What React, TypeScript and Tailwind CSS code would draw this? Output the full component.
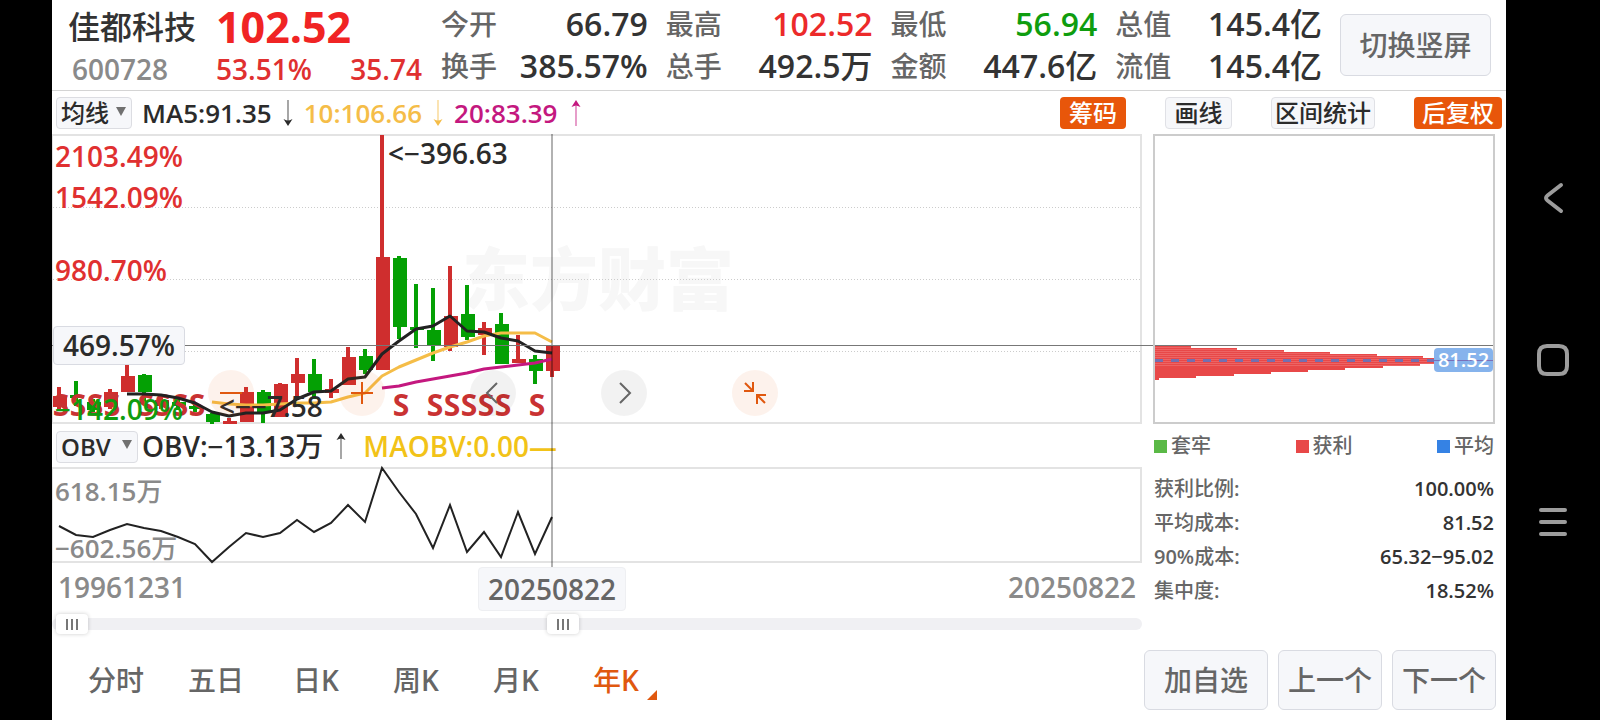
import { useState } from "react";
import clsx from "clsx";

type Candle = {
  up: boolean;
  high: number;
  top: number;
  bottom: number;
  low: number;
};

type Stat = {
  label: string;
  value: string;
  color?: string;
};

const STEP = 17;
const cx = (i: number) => 6 + i * STEP;

const c = (dir: "r" | "g", high: number, top: number, bottom: number, low: number): Candle => ({
  up: dir === "r",
  high,
  top,
  bottom,
  low,
});

const candles: Candle[] = [
  c("r", 251, 260, 271, 274),
  c("g", 245, 259, 262, 270),
  c("g", 263, 266, 274, 276),
  c("r", 253, 256, 271, 273),
  c("r", 229, 240, 256, 256),
  c("g", 238, 239, 256, 266),
  c("r", 262, 264, 270, 273),
  c("g", 263, 266, 270, 274),
  c("g", 268, 270, 273, 276),
  c("g", 277, 278, 286, 288),
  c("r", 282, 285, 288, 288),
  c("r", 251, 256, 286, 286),
  c("g", 254, 256, 277, 287),
  c("r", 247, 248, 281, 281),
  c("r", 222, 238, 247, 263),
  c("g", 223, 238, 256, 263),
  c("r", 243, 253, 257, 262),
  c("r", 211, 221, 249, 249),
  c("g", 213, 220, 234, 238),
  c("r", -1, 121, 234, 234),
  c("g", 120, 122, 191, 203),
  c("g", 148, 191, 194, 212),
  c("g", 152, 194, 210, 225),
  c("r", 130, 180, 211, 215),
  c("g", 149, 178, 201, 204),
  c("r", 186, 192, 199, 219),
  c("g", 177, 188, 228, 228),
  c("r", 199, 223, 227, 227),
  c("g", 219, 223, 235, 248),
  c("r", 209, 209, 235, 241),
];

const ma5 = [258, 258, 259, 262, 267, 276, 280, 277, 277, 274, 263, 256, 255, 243, 241, 218, 205, 193, 190, 180, 195, 196, 202, 205, 215, 217];
const ma10 = [266, 268, 269, 269, 268, 267, 267, 266, 261, 257, 240, 231, 224, 217, 211, 206, 200, 197, 197, 197, 206];
const ma20 = [252, 250, 246, 243, 240, 237, 233, 231, 229, 227, 223];
const obv = [57, 66, 68, 61, 55, 59, 62, 68, 75, 93, 78, 64, 68, 64, 51, 63, 54, 36, 53, -1, 23, 45, 79, 36, 83, 63, 88, 43, 85, 48];

const sellMarks = [0, 1, 2, 3, 5, 6, 7, 8, 20, 22, 23, 24, 25, 26, 28];

// price distribution, one bar every two pixels
const chips = [36, 82, 129, 175, 222, 268, 285, 292, 285, 265, 228, 190, 153, 116, 79, 41, 4];

const stats: Stat[] = [
  { label: "今开", value: "66.79" },
  { label: "最高", value: "102.52", color: "text-[#ec2a2a]" },
  { label: "最低", value: "56.94", color: "text-[#0f9d0f]" },
  { label: "总值", value: "145.4亿" },
  { label: "换手", value: "385.57%" },
  { label: "总手", value: "492.5万" },
  { label: "金额", value: "447.6亿" },
  { label: "流值", value: "145.4亿" },
];

const costs = [
  ["获利比例:", "100.00%"],
  ["平均成本:", "81.52"],
  ["90%成本:", "65.32−95.02"],
  ["集中度:", "18.52%"],
];

const tabs = ["分时", "五日", "日K", "周K", "月K", "年K"];

const points = (values: number[], start = 0) =>
  values.map((v, i) => `${cx(i + start)},${v}`).join(" ");

// Han characters get a lighter weight than the digits beside them
function Mixed({ children }: { children: string }) {
  return (
    <>
      {(children.match(/[\u4e00-\u9fff]+|[^\u4e00-\u9fff]+/g) ?? []).map((part, i) => (
        <span key={i} className={/[\u4e00-\u9fff]/.test(part) ? "font-medium" : "font-semibold"}>
          {part}
        </span>
      ))}
    </>
  );
}

export default function App() {
  return (
    <div className="flex min-h-screen bg-black pl-[52px] font-['Open_Sans','Noto_Sans_CJK_SC',sans-serif] font-semibold text-[#2b2b2b]">
      <main className="flex min-w-0 flex-1 flex-col bg-white">
        <Header />
        <Toolbar />
        <div className="flex gap-[11px] pr-[11px]">
          <Charts />
          <ChipPanel />
        </div>
        <BottomBar />
      </main>
      <SystemNav />
    </div>
  );
}

function Header() {
  return (
    <header className="flex h-[91px] items-center border-b border-[#d4d4d4] pr-[15px]">
      <div className="grid w-[389px] shrink-0 grid-cols-[148px_206px] items-center pl-4 pt-1">
        <h1 className="text-[32px] font-medium leading-[44px] text-[#333]">佳都科技</h1>
        <span className="text-[43px] font-bold leading-[44px] text-[#f02424]">102.52</span>
        <span className="pl-1 text-[28px] leading-10 text-[#8a8a8a]">600728</span>
        <div className="flex justify-between text-[28px] leading-10 text-[#e03030]">
          <span>53.51%</span>
          <span>35.74</span>
        </div>
      </div>
      <dl className="grid flex-1 grid-cols-4 gap-x-[18px]">
        {stats.map((s) => (
          <div key={s.label} className="flex items-center justify-between leading-[42px]">
            <dt className="text-[28px] font-medium text-[#666]">{s.label}</dt>
            <dd className={clsx("text-[32px]", s.color ?? "text-[#333]")}>
              <Mixed>{s.value}</Mixed>
            </dd>
          </div>
        ))}
      </dl>
      <button className="ml-[18px] h-[62px] w-[151px] rounded-md border border-[#d9dbe2] bg-[#f6f7fa] text-[28px] font-medium leading-none text-[#666]">
        切换竖屏
      </button>
    </header>
  );
}

function Toolbar() {
  return (
    <div className="flex h-[43px] items-center pl-1 pr-1 text-[26px] leading-8">
      <Picker label="指标" value="均线" className="w-[76px] font-medium" />
      <span className="ml-[10px]">MA5:91.35</span>
      <Arrow className="mx-[10px] text-[#2b2b2b]" />
      <span className="text-[#f5bd48]">10:106.66</span>
      <Arrow className="mx-[10px] text-[#f5bd48]" />
      <span className="text-[#c4187f]">20:83.39</span>
      <Arrow up className="ml-3 text-[#c4187f]" />
      <div className="ml-auto flex text-2xl font-medium leading-none">
        <button className="h-8 w-[66px] rounded bg-[#e8560a] text-white">筹码</button>
        <button className="ml-[39px] h-8 w-[67px] rounded border border-[#e0e1e6] bg-[#f6f7fa]">画线</button>
        <button className="ml-[39px] h-8 w-[104px] rounded border border-[#e0e1e6] bg-[#f6f7fa]">区间统计</button>
        <button className="ml-[39px] h-8 w-[88px] rounded bg-[#e8560a] text-white">后复权</button>
      </div>
    </div>
  );
}

function Picker({ label, value, className }: { label: string; value: string; className: string }) {
  return (
    <div className={clsx("relative shrink-0", className)}>
      <select
        aria-label={label}
        defaultValue={value}
        className="h-8 w-full appearance-none rounded border border-[#dcdde2] bg-[#f6f7fa] pl-1 text-2xl leading-none"
      >
        <option>{value}</option>
      </select>
      <svg className="pointer-events-none absolute right-[6px] top-[11px]" width="10" height="9">
        <path d="M0 0H10L5 9Z" fill="#707070" />
      </svg>
    </div>
  );
}

function Arrow({ up, className }: { up?: boolean; className?: string }) {
  return (
    <svg width="12" height="26" viewBox="0 0 12 26" className={clsx("shrink-0", up && "rotate-180", className)}>
      <path d="M6 0V22" stroke="currentColor" strokeOpacity="0.6" strokeWidth="1.4" />
      <path d="M1.5 19Q4.500 20.500 6 20.500T10.500 19L6 26Z" fill="currentColor" />
    </svg>
  );
}

function Charts() {
  return (
    <section className="relative min-w-0 flex-1">
      <PriceChart />
      <div className="flex h-[43px] items-center pl-1 text-[28px] leading-8">
        <Picker label="副图指标" value="OBV" className="w-[82px]" />
        <span className="ml-1">
          <Mixed>OBV:−13.13万</Mixed>
        </span>
        <Arrow up className="ml-3" />
        <span className="ml-4 text-[#f2c318]">MAOBV:0.00—</span>
      </div>
      <div className="relative h-24 border-2 border-l border-[#e3e3e3] text-[26px] leading-7 text-[#8a8a8a]">
        <svg className="absolute inset-0 h-full w-full overflow-visible">
          <polyline points={points(obv)} fill="none" stroke="#222" strokeWidth="2" />
        </svg>
        <span className="absolute left-[2px] top-2">
          <Mixed>618.15万</Mixed>
        </span>
        <span className="absolute -bottom-px left-[2px]">
          <Mixed>−602.56万</Mixed>
        </span>
      </div>
      <div className="flex h-[51px] justify-between px-[6px] pt-2 text-[28px] leading-8 text-[#8a8a8a]">
        <span>19961231</span>
        <span>20250822</span>
      </div>
      <RangeSlider />

      {/* crosshair */}
      <div className="pointer-events-none absolute left-[499px] top-0 h-[433px] w-[2px] bg-black/30" />
      <div className="pointer-events-none absolute -right-[353px] left-0 top-[211px] h-px bg-[#777]" />
      <div className="absolute left-px top-[192px] h-[39px] w-[132px] rounded border border-[#d9dbe2] bg-[#f6f7fa] text-center text-[28px] leading-9">
        469.57%
      </div>
      <div className="absolute left-[426px] top-[433px] h-11 w-[148px] rounded border border-[#eeeff2] bg-[#f6f7fa] text-center text-[28px] leading-[42px] text-[#666]">
        20250822
      </div>
    </section>
  );
}

function PriceChart() {
  return (
    <div className="relative h-[290px] border-2 border-l border-[#e3e3e3]">
      <svg className="absolute inset-0 h-full w-full overflow-visible">
        <text x="409" y="169" fontSize="68" fontWeight="900" fill="#f7f7f7">
          东方财富
        </text>
        {[71, 143, 215].map((y) => (
          <line key={y} x1="0" x2="100%" y1={y + 0.5} y2={y + 0.5} stroke="#ccc" strokeDasharray="1 2" />
        ))}
        {candles.map((k, i) => (
          <g key={i} fill={k.up ? "#cf2e2e" : "#04a004"}>
            <rect x={cx(i) - 2} y={k.high} width="4" height={k.low - k.high} />
            <rect x={Math.max(cx(i) - 6, 0)} y={k.top} width="14" height={k.bottom - k.top} />
          </g>
        ))}
        <g fontSize="30" fontWeight="700" fill="#c93232" textAnchor="middle">
          {sellMarks.map((i) => (
            <text key={i} x={cx(i) + 2} y="280">
              S
            </text>
          ))}
        </g>
        <g fill="none" strokeWidth="3" strokeLinejoin="round">
          <polyline points={points(ma10, 9)} stroke="#f5bd48" />
          <polyline points={points(ma20, 19)} stroke="#c4187f" />
          <polyline points={points(ma5, 4)} stroke="#222" />
        </g>
        <g fontSize="28" fill="#2b2b2b">
          <text x="335" y="28">&lt;−396.63</text>
          <text x="166" y="281">&lt;−−7.58</text>
        </g>
      </svg>

      <div className="text-[28px] leading-7 text-[#e03030]">
        <span className="absolute left-[2px] top-[6px]">2103.49%</span>
        <span className="absolute left-[2px] top-[47px]">1542.09%</span>
        <span className="absolute left-[2px] top-[120px]">980.70%</span>
        <span className="absolute left-[2px] top-[259px] text-[#0f9d0f]">−142.09%</span>
      </div>

      <div className="absolute left-[155px] top-[234px] flex gap-[85px]">
        <RoundButton label="缩小" tone="orange" d="M12 23H34" />
        <RoundButton label="放大" tone="orange" d="M12 23H34M23 12V34" />
        <RoundButton label="左移" tone="gray" d="M27 13L17 23L27 33" />
        <RoundButton label="右移" tone="gray" d="M19 13L29 23L19 33" />
        <RoundButton label="收起" tone="orange" d="M13 13L21 21M12 21H21V12M33 33L25 25M34 25H25V34" />
      </div>
    </div>
  );
}

function RoundButton({ label, tone, d }: { label: string; tone: "orange" | "gray"; d: string }) {
  return (
    <button
      aria-label={label}
      className={clsx(
        "h-[46px] w-[46px] rounded-full",
        tone === "orange" ? "bg-[#e8560a]/8 text-[#e0580f]" : "bg-black/5 text-[#666]",
      )}
    >
      <svg width="46" height="46" fill="none" stroke="currentColor" strokeWidth="2">
        <path d={d} />
      </svg>
    </button>
  );
}

const rangeClass =
  "pointer-events-none absolute left-1 top-0 h-5 w-[calc(100%-4px)] appearance-none bg-transparent [&::-webkit-slider-thumb]:pointer-events-auto [&::-webkit-slider-thumb]:h-5 [&::-webkit-slider-thumb]:w-8 [&::-webkit-slider-thumb]:appearance-none [&::-webkit-slider-thumb]:rounded [&::-webkit-slider-thumb]:shadow-[0_0_4px_rgba(0,0,0,0.2)] [&::-webkit-slider-thumb]:[background:linear-gradient(90deg,#777_2px,transparent_2px,transparent_5px,#777_5px,#777_7px,transparent_7px,transparent_10px,#777_10px)_center/12px_11px_no-repeat,white]";

function RangeSlider() {
  const [from, setFrom] = useState(0);
  const [to, setTo] = useState(466);
  return (
    <div className="relative flex h-5 items-center">
      <div className="h-3 w-full rounded-full bg-[#f0f0f3]" />
      <input
        type="range"
        aria-label="起始日期"
        min={0}
        max={1000}
        value={from}
        onChange={(e) => setFrom(Math.min(Number(e.target.value), to))}
        className={rangeClass}
      />
      <input
        type="range"
        aria-label="结束日期"
        min={0}
        max={1000}
        value={to}
        onChange={(e) => setTo(Math.max(Number(e.target.value), from))}
        className={rangeClass}
      />
    </div>
  );
}

function ChipPanel() {
  return (
    <aside className="w-[342px] shrink-0">
      <div className="relative h-[290px] border-2 border-[#ccc]">
        <svg className="absolute inset-0 h-full w-full">
          {chips.map((w, i) => (
            <g key={i}>
              <rect y={210 + i * 2} width={w} height="2" fill="#e84848" />
              {i < 10 && <rect y={211 + i * 2} width={w} height="1" fill="#f07878" fillOpacity="0.6" />}
            </g>
          ))}
          <line x1="0" x2="282" y1="224.500" y2="224.500" stroke="#7470b0" strokeWidth="3" strokeDasharray="8 8" />
        </svg>
        <span className="absolute right-0 top-[212px] h-6 w-[59px] rounded bg-[#86b3ec] text-center text-xl leading-6 text-white">
          <span className="absolute inset-x-0 top-3 h-px bg-[#7a70b8]" />
          <span className="relative">81.52</span>
        </span>
      </div>
      <ul className="flex h-11 items-center justify-between px-px text-xl font-medium leading-6 text-[#666]">
        <li className="flex items-center gap-1">
          <i className="h-[13px] w-[13px] bg-[#5ab946]" />
          套牢
        </li>
        <li className="flex items-center gap-1">
          <i className="h-[13px] w-[13px] bg-[#e84848]" />
          获利
        </li>
        <li className="flex items-center gap-1">
          <i className="h-[13px] w-[13px] bg-[#3582e4]" />
          平均
        </li>
      </ul>
      <dl className="pt-1 text-xl leading-[34px]">
        {costs.map(([name, value]) => (
          <div key={name} className="flex justify-between px-px">
            <dt className="text-[#666]">
              <Mixed>{name}</Mixed>
            </dt>
            <dd className="text-[#333]">{value}</dd>
          </div>
        ))}
      </dl>
    </aside>
  );
}

function BottomBar() {
  const [active, setActive] = useState("年K");
  const buttonClass = "h-[60px] rounded-md border border-[#d9dbe2] bg-[#f6f7fa] leading-none";
  return (
    <footer className="mt-4 flex items-center justify-between pl-[14px] pr-[10px] text-[28px] font-medium text-[#666]">
      <nav className="flex">
        {tabs.map((tab) => (
          <button
            key={tab}
            onClick={() => setActive(tab)}
            className={clsx("relative w-[100px] text-center leading-10", tab === active && "text-[#e0580f]")}
          >
            <Mixed>{tab}</Mixed>
            {tab === active && (
              <svg className="absolute bottom-0 right-[9px]" width="10" height="10">
                <path d="M10 0V10H0Z" fill="currentColor" />
              </svg>
            )}
          </button>
        ))}
      </nav>
      <div className="flex gap-[10px]">
        <button className={clsx(buttonClass, "w-[124px]")}>加自选</button>
        <button className={clsx(buttonClass, "w-[104px]")}>上一个</button>
        <button className={clsx(buttonClass, "w-[104px]")}>下一个</button>
      </div>
    </footer>
  );
}

function SystemNav() {
  const icons = [
    { label: "返回", d: "M24 3L10.500 13.500Q7.500 16 10.500 18.500L24 29" },
    { label: "主页", d: "M10 2H22Q30 2 30 10V22Q30 30 22 30H10Q2 30 2 22V10Q2 2 10 2Z" },
    { label: "任务", d: "M4 4H28M4 16H28M4 28H28" },
  ];
  return (
    <nav className="flex w-[94px] shrink-0 flex-col items-center justify-center gap-[130px]">
      {icons.map((icon) => (
        <button key={icon.label} aria-label={icon.label} className="h-8 w-8">
          <svg viewBox="0 0 32 32" fill="none" stroke="#9c9c9c" strokeWidth="4" strokeLinecap="round" strokeLinejoin="round">
            <path d={icon.d} />
          </svg>
        </button>
      ))}
    </nav>
  );
}
